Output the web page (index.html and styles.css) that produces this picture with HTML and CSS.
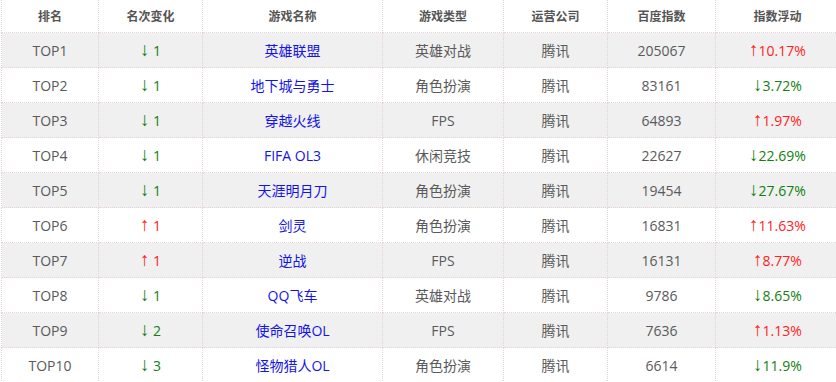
FILE: index.html
```html
<!DOCTYPE html>
<html lang="zh">
<head>
<meta charset="utf-8">
<link rel="stylesheet" href="styles.css">
</head>
<body>
<div class="wrap">
<table class="rank">
  <colgroup>
    <col class="c1"><col class="c2"><col class="c3"><col class="c4"><col class="c5"><col class="c6"><col class="c7">
  </colgroup>
  <thead>
    <tr><th>排名</th><th>名次变化</th><th>游戏名称</th><th>游戏类型</th><th>运营公司</th><th>百度指数</th><th>指数浮动</th></tr>
  </thead>
  <tbody>
    <tr><td>TOP1</td><td class="down"><span class="arr">↓</span> 1</td><td><a class="game">英雄联盟</a></td><td>英雄对战</td><td>腾讯</td><td>205067</td><td class="up"><span class="arr">↑</span>10.17%</td></tr>
    <tr><td>TOP2</td><td class="down"><span class="arr">↓</span> 1</td><td><a class="game">地下城与勇士</a></td><td>角色扮演</td><td>腾讯</td><td>83161</td><td class="down"><span class="arr">↓</span>3.72%</td></tr>
    <tr><td>TOP3</td><td class="down"><span class="arr">↓</span> 1</td><td><a class="game">穿越火线</a></td><td>FPS</td><td>腾讯</td><td>64893</td><td class="up"><span class="arr">↑</span>1.97%</td></tr>
    <tr><td>TOP4</td><td class="down"><span class="arr">↓</span> 1</td><td><a class="game">FIFA OL3</a></td><td>休闲竞技</td><td>腾讯</td><td>22627</td><td class="down"><span class="arr">↓</span>22.69%</td></tr>
    <tr><td>TOP5</td><td class="down"><span class="arr">↓</span> 1</td><td><a class="game">天涯明月刀</a></td><td>角色扮演</td><td>腾讯</td><td>19454</td><td class="down"><span class="arr">↓</span>27.67%</td></tr>
    <tr><td>TOP6</td><td class="up"><span class="arr">↑</span> 1</td><td><a class="game">剑灵</a></td><td>角色扮演</td><td>腾讯</td><td>16831</td><td class="up"><span class="arr">↑</span>11.63%</td></tr>
    <tr><td>TOP7</td><td class="up"><span class="arr">↑</span> 1</td><td><a class="game">逆战</a></td><td>FPS</td><td>腾讯</td><td>16131</td><td class="up"><span class="arr">↑</span>8.77%</td></tr>
    <tr><td>TOP8</td><td class="down"><span class="arr">↓</span> 1</td><td><a class="game">QQ飞车</a></td><td>英雄对战</td><td>腾讯</td><td>9786</td><td class="down"><span class="arr">↓</span>8.65%</td></tr>
    <tr><td>TOP9</td><td class="down"><span class="arr">↓</span> 2</td><td><a class="game">使命召唤OL</a></td><td>FPS</td><td>腾讯</td><td>7636</td><td class="up"><span class="arr">↑</span>1.13%</td></tr>
    <tr><td>TOP10</td><td class="down"><span class="arr">↓</span> 3</td><td><a class="game">怪物猎人OL</a></td><td>角色扮演</td><td>腾讯</td><td>6614</td><td class="down"><span class="arr">↓</span>11.9%</td></tr>
  </tbody>
</table>
</div>
</body>
</html>
```
FILE: styles.css
```css
html, body {
  margin: 0;
  padding: 0;
  background: #fff;
  overflow: hidden;
}
.wrap {
  padding-left: 1px;
  width: 840px;
}
.rank {
  border-collapse: collapse;
  table-layout: fixed;
  width: 838px;
  font-family: "Open Sans", "Noto Sans CJK SC", sans-serif;
  font-size: 14px;
  color: #5a5a5a;
}
.c1 { width: 97px; }
.c2 { width: 104px; }
.c3 { width: 180px; }
.c4 { width: 121px; }
.c5 { width: 104px; }
.c6 { width: 108px; }
.c7 { width: 124px; }
.rank th, .rank td {
  border: 1px dotted #e6d3da;
  text-align: center;
  padding: 0;
  white-space: nowrap;
}
.rank th {
  height: 32px;
  font-size: 12px;
  font-weight: bold;
  color: #555;
  border-top: none;
}
.rank td {
  height: 34px;
}
.rank tbody tr:nth-child(odd) {
  background: #f0f0f0;
}
.game {
  color: #1414e6;
  text-decoration: none;
}
.arr {
  font-family: "Liberation Sans", sans-serif;
  font-size: 19px;
  line-height: 1;
}
.down { color: #118011; }
.up { color: #f22; }
```
